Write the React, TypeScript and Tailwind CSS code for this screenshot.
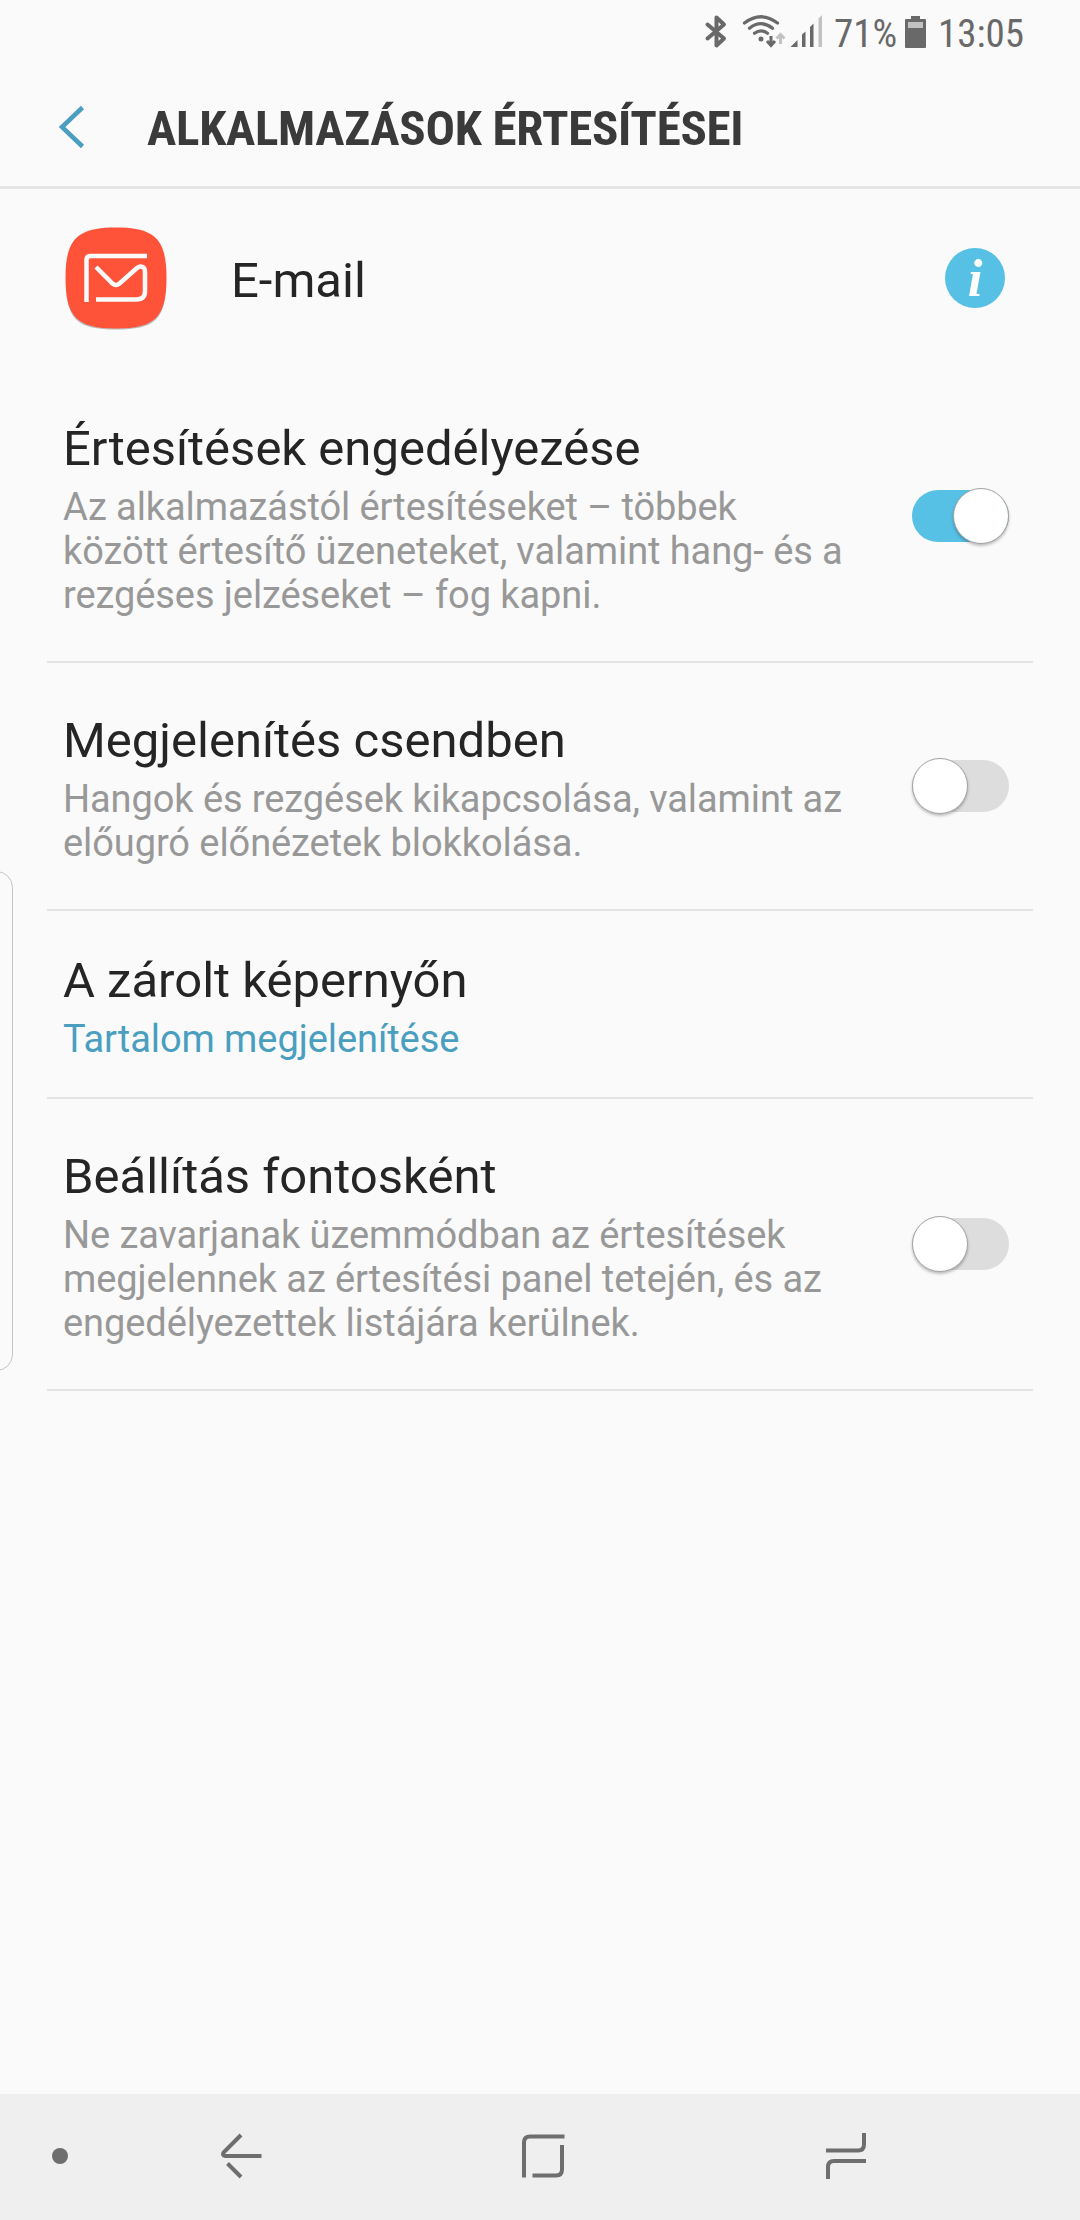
import { useState } from 'react';
import clsx from 'clsx';

type Setting = {
  id: string;
  title: string;
  lines: string[];
  link?: boolean;
};

const settings: Setting[] = [
  {
    id: 'allow',
    title: 'Értesítések engedélyezése',
    lines: [
      'Az alkalmazástól értesítéseket – többek',
      'között értesítő üzeneteket, valamint hang- és a',
      'rezgéses jelzéseket – fog kapni.',
    ],
  },
  {
    id: 'silent',
    title: 'Megjelenítés csendben',
    lines: ['Hangok és rezgések kikapcsolása, valamint az', 'előugró előnézetek blokkolása.'],
  },
  {
    id: 'lockscreen',
    title: 'A zárolt képernyőn',
    lines: ['Tartalom megjelenítése'],
    link: true,
  },
  {
    id: 'priority',
    title: 'Beállítás fontosként',
    lines: [
      'Ne zavarjanak üzemmódban az értesítések',
      'megjelennek az értesítési panel tetején, és az',
      'engedélyezettek listájára kerülnek.',
    ],
  },
];

function StatusBar() {
  return (
    <div className="flex h-[72px] shrink-0 items-start pl-[704px] text-[#696969]">
      {/* Bluetooth, wifi, signal */}
      <svg width="124" height="60" viewBox="704 0 124 60" fill="none" className="shrink-0">
        <path
          d="M707.500 24.500L724 38.500L716.500 45.500V17.500L724 24.500L707.500 38.500"
          stroke="#696969"
          strokeWidth="4"
          strokeLinejoin="round"
          strokeLinecap="round"
        />
        <g stroke="#696969" strokeWidth="3.200" strokeLinecap="round">
          <path d="M744.500 23Q761 10.500 777.500 23" />
          <path d="M749.500 28.200Q761 19.200 772.500 28.200" />
          <path d="M754.500 33.300Q761 28.500 767.500 33.300" />
        </g>
        <circle cx="761" cy="39" r="2.500" fill="#696969" />
        <path d="M771 36V44M767 41L771 45.500L775 41" stroke="#696969" strokeWidth="3" />
        <path d="M780.500 44V35M776.500 38.500L780.500 34.500L784.500 38.500" stroke="#c2c2c2" strokeWidth="3" />
        <path d="M790.500 47L797.500 40V47Z" fill="#696969" />
        <path d="M802 47V34.500L805.500 31.500V47Z" fill="#696969" />
        <path d="M810 47V27L813.500 23.500V47Z" fill="#696969" />
        <path d="M818.500 47V18.500L822 15V47Z" fill="#c2c2c2" />
      </svg>
      <span className="mt-[11px] ml-[6px] w-[66px] text-[39px] leading-[46px] whitespace-nowrap font-stretch-condensed">
        71%
      </span>
      <svg width="21" height="32" viewBox="0 0 21 32" className="mt-[15.500px] ml-[5px] shrink-0">
        <path d="M6 0H15V3H20Q21 3 21 4V31Q21 32 20 32H1Q0 32 0 31V4Q0 3 1 3H6Z" fill="#696969" />
        <rect x="3" y="6" width="15" height="6" fill="#c2c2c2" />
      </svg>
      <span className="mt-[11px] ml-[12px] text-[39px] leading-[46px] whitespace-nowrap font-stretch-condensed">
        13:05
      </span>
    </div>
  );
}

function EmailIcon() {
  return (
    <svg width="104" height="106" viewBox="0 0 104 106" fill="none" className="mt-[2px]">
      <path
        d="M2 54C2 13 12 3 52 3C92 3 102 13 102 54C102 94 91 103.500 52 103.500C13 103.500 2 94 2 54Z"
        fill="#000"
        opacity="0.250"
      />
      <path
        d="M1.500 52C1.500 13 13 1.500 52 1.500C91 1.500 102.500 13 102.500 52C102.500 91 91 102.500 52 102.500C13 102.500 1.500 91 1.500 52Z"
        fill="#ff5339"
      />
      <g stroke="#fafafa" strokeWidth="4.500">
        <path d="M22.500 76V34Q22.500 30 26.500 30H83" />
        <path d="M32 41L48.500 57.500Q52 60.500 55.500 57.500L73 42Q76 39.500 79 41.200Q81 42.500 81 46V65Q81 73.500 72.500 73.500H32" />
      </g>
    </svg>
  );
}

function Toggle({ checked, onChange }: { checked: boolean; onChange: () => void }) {
  return (
    <button
      type="button"
      role="switch"
      aria-checked={checked}
      onClick={onChange}
      className={clsx(
        '-mt-1 flex h-[52px] w-[97px] shrink-0 items-center rounded-full',
        checked ? 'justify-end bg-[#57c0e5]' : 'justify-start bg-[#dddddd]'
      )}
    >
      <span className="size-[56px] shrink-0 rounded-full border border-[#a3a3a3] bg-white shadow-[0_2px_3px_rgba(0,0,0,0.25)]" />
    </button>
  );
}

export default function App() {
  const [enabled, setEnabled] = useState<Record<string, boolean>>({ allow: true });

  const toggle = (id: string) => setEnabled((prev) => ({ ...prev, [id]: !prev[id] }));

  return (
    <div className="relative flex h-[2220px] w-[1080px] flex-col overflow-hidden bg-[#fafafa] font-['Roboto',sans-serif] text-[#252525]">
      <StatusBar />

      {/* Header */}
      <header className="flex h-[117px] shrink-0 items-center border-b-[3px] border-[#e6e6e6] pl-[58px]">
        <svg width="28" height="44" viewBox="0 0 28 44" fill="none" className="-mt-[5px]">
          <path d="M24.500 2.500L4 22L24.500 41.500" stroke="#4a9fc0" strokeWidth="4.500" />
        </svg>
        <h1 className="ml-[61px] text-[49px] leading-[58px] font-bold tracking-[-0.29px] whitespace-nowrap text-[#3a3a3a] font-stretch-condensed">
          ALKALMAZÁSOK ÉRTESÍTÉSEI
        </h1>
      </header>

      {/* App row */}
      <div className="flex h-[182px] shrink-0 items-center pr-[75px] pb-1 pl-[64px]">
        <EmailIcon />
        <span className="mt-[6px] ml-[63px] flex-1 text-[49px] leading-[60px]">E-mail</span>
        <button
          type="button"
          className="flex size-[60px] items-center justify-center rounded-full bg-[#57c0e5] font-['Liberation_Serif',serif] text-[53px] leading-[53px] font-bold text-white italic"
        >
          i
        </button>
      </div>

      {/* Settings */}
      <main className="flex-1 px-[47px]">
        {settings.map((item) => (
          <section
            key={item.id}
            className={clsx(
              'flex items-center justify-between border-b-2 border-[#e4e4e4] pr-[24px] pl-4',
              item.link ? 'pt-10 pb-9' : 'pt-12 pb-11'
            )}
          >
            <div className="whitespace-nowrap">
              <h2 className="text-[49px] leading-[60px]">{item.title}</h2>
              <p
                className={clsx(
                  'mt-1.5 text-[38px] leading-[44px] tracking-[-0.08px]',
                  item.link ? 'text-[#4a9fc0]' : 'text-[#989898]'
                )}
              >
                {item.lines.map((line) => (
                  <span key={line} className="block">
                    {line}
                  </span>
                ))}
              </p>
            </div>
            {!item.link && <Toggle checked={!!enabled[item.id]} onChange={() => toggle(item.id)} />}
          </section>
        ))}
      </main>

      {/* Edge panel handle */}
      <div className="absolute top-[871px] -left-[20px] h-[500px] w-[33px] rounded-[20px] border border-[#c4c4c4]" />

      {/* Navigation bar */}
      <nav className="flex h-[126px] shrink-0 items-center bg-[#efefef] pb-0.5 pl-[52px]">
        <span className="size-4 rounded-full bg-[#6e6e6e]" />
        <svg width="44" height="48" viewBox="0 0 44 48" fill="none" stroke="#6e6e6e" strokeWidth="4" className="ml-[151px]">
          <path d="M42.500 24H6.500Q2.500 23.500 5 20L22 3M8.500 31.500L22 45" />
        </svg>
        <svg width="44" height="46" viewBox="0 0 44 46" fill="none" stroke="#6e6e6e" strokeWidth="4" className="ml-[258px]">
          <path d="M3 44.500V9.500Q3 3.500 9 3.500H43.500M41 12V36.500Q41 42.500 35 42.500H11.500" />
        </svg>
        <svg width="42" height="48" viewBox="0 0 42 48" fill="none" stroke="#6e6e6e" strokeWidth="4" className="ml-[260px]">
          <path d="M1 18.500H33Q39 18.500 39 12.500V1M3 47V35Q3 29 9 29H41" />
        </svg>
      </nav>
    </div>
  );
}
